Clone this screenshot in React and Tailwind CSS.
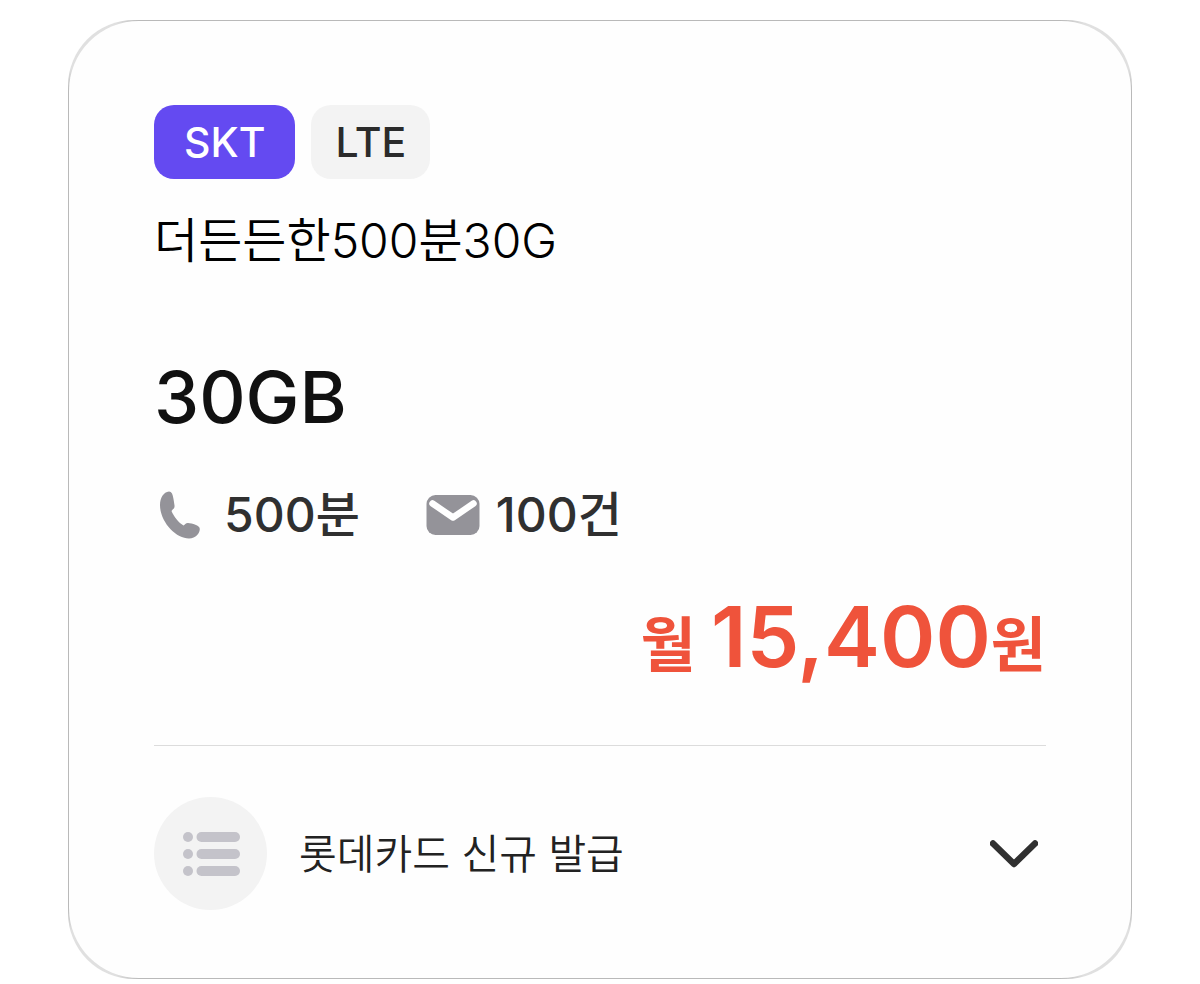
import React, { useState } from 'react';

const plan = {
  carrier: 'SKT',
  network: 'LTE',
  name: '더든든한500분30G',
  data: '30GB',
  voice: '500분',
  sms: '100건',
  price: '15,400',
  benefit: '롯데카드 신규 발급'
};

const PhoneIcon = () => (
  <svg width="42" height="50" viewBox="0 0 42 50" fill="#949399" aria-hidden="true">
    <path d="M11 1.500C5.500 2 2 8 2 15C2 32 18 48.500 31 48.500C38 48.500 41.800 43 41.800 39C41.800 35 34 33.500 30 33C28 32.800 26.500 35 25.500 35.500C21 33 15.500 26 13.500 21C14.500 19.500 17 18 16.500 15.500C16 11 15 5.500 14 3.500C13.300 2.200 12.300 1.500 11 1.500Z" />
  </svg>
);

const MailIcon = () => (
  <svg width="54" height="42" viewBox="0 0 54 42" aria-hidden="true">
    <rect x="0.500" y="1" width="53" height="40" rx="9" fill="#949399" />
    <path d="M6.500 9.500L27 23.500L47.500 9.500" fill="none" stroke="#fff" strokeWidth="6.500" strokeLinecap="round" strokeLinejoin="round" />
  </svg>
);

const ListIcon = () => (
  <svg width="58" height="44" viewBox="0 0 58 44" fill="#c4c3ca" aria-hidden="true">
    {[0, 17, 34].map((y) => (
      <g key={y}>
        <circle cx="6" cy={y + 5} r="5" />
        <rect x="14.500" y={y} width="43.500" height="10" rx="5" />
      </g>
    ))}
  </svg>
);

const ChevronIcon = ({ open }) => (
  <svg width="48" height="28" viewBox="0 0 48 28" className={open ? 'rotate-180' : ''} aria-hidden="true">
    <path d="M3 3.500L24 24L45 3.500" fill="none" stroke="#303030" strokeWidth="6.500" strokeLinecap="round" strokeLinejoin="round" />
  </svg>
);

const App = () => {
  const [open, setOpen] = useState(false);

  return (
    <main className="bg-white px-[68px] py-5 font-['Inter','Noto_Sans_CJK_KR',sans-serif]" lang="ko">
      {/* hairline frame: dark along the sides, lighter and wider in the corners */}
      <div className="rounded-[66px] bg-[#e0e0e0] bg-[linear-gradient(90deg,transparent_48px,#b9b9b9_72px,#b9b9b9_calc(100%-72px),transparent_calc(100%-48px)),linear-gradient(180deg,transparent_48px,#b9b9b9_72px,#b9b9b9_calc(100%-72px),transparent_calc(100%-48px))] p-px">
        <article className="rounded-[70px] bg-[#fefefe] px-[85px] pt-[84px] pb-[68px]">
          <div className="flex gap-4">
            <span className="rounded-[20px] bg-[#644af1] px-[30px] text-[41px] leading-[74px] font-medium text-white">{plan.carrier}</span>
            <span className="rounded-[20px] bg-[#f3f3f3] px-6 text-[41px] leading-[74px] font-medium text-[#2b2b2b]">{plan.network}</span>
          </div>

          <h2 className="mt-8 text-[48px] leading-[60px] font-[350] text-black">{plan.name}</h2>
          <p className="mt-[86px] text-[72px] leading-[80px] font-medium text-[#111]">{plan.data}</p>

          <div className="mt-12 flex gap-[66px] text-[48px] leading-[60px] font-medium text-[#303030]">
            <div className="flex items-center gap-6 pl-1">
              <PhoneIcon />
              <span>{plan.voice}</span>
            </div>
            <div className="flex items-center gap-4">
              <MailIcon />
              <span>{plan.sms}</span>
            </div>
          </div>

          <p className="mt-11 text-right text-[60px] leading-[96px] font-semibold text-[#ef533b]">
            월 <span className="text-[84px]">{plan.price}</span>원
          </p>

          <hr className="mt-[52px] border-[#dcdcdc]" />

          <button
            type="button"
            aria-expanded={open}
            onClick={() => setOpen(!open)}
            className="mt-[51px] flex w-full items-center pr-2 text-left text-[41px] leading-[60px] font-[350] text-[#222]"
          >
            <span className="mr-8 flex size-[113px] items-center justify-center rounded-full bg-[#f3f3f3]">
              <ListIcon />
            </span>
            <span className="flex-1">{plan.benefit}</span>
            <ChevronIcon open={open} />
          </button>
        </article>
      </div>
    </main>
  );
};

export default App;
